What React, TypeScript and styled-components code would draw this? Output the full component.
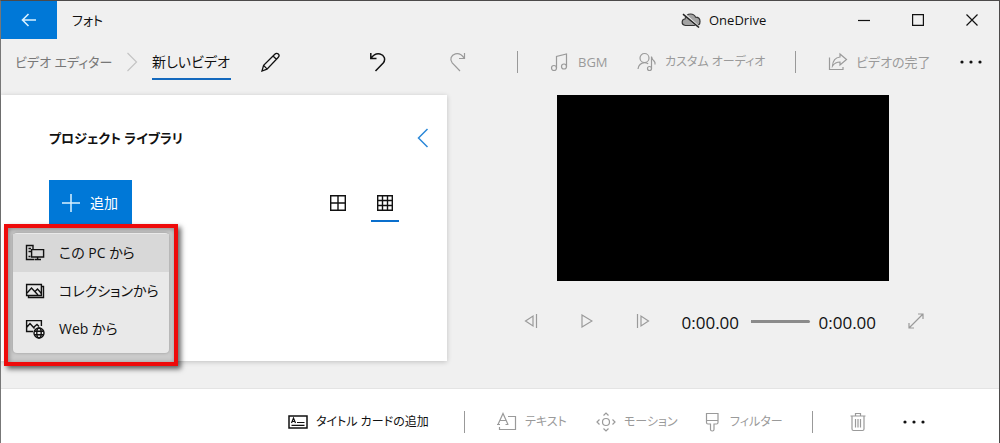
import React from "react";
import styled, { createGlobalStyle, css } from "styled-components";

const Global = createGlobalStyle`
  * { box-sizing: border-box; }
  body {
    margin: 0;
    background: #f0f0f0;
    color: #111;
    font-family: "Open Sans", "Noto Sans CJK JP", sans-serif;
    font-size: 14px;
    line-height: 20px;
    font-feature-settings: "palt";
  }
  button, a, h2, input { font: inherit; color: inherit; margin: 0; }
`;

const BLUE = "#0078d7";
const MUTED = "#9a9a9a";

const AppWindow = styled.div`
  display: flex;
  flex-direction: column;
  min-height: 100vh;
  border: 1px solid #4c4a4a;
  border-left-color: #777;
  border-bottom: 0;
`;

const bare = css`
  border: 0;
  padding: 0;
  background: none;
  display: flex;
  align-items: center;
  white-space: nowrap;
  cursor: pointer;
`;

const TitleBar = styled.header`
  display: flex;
  align-items: stretch;
  height: 38px;
`;

const BackButton = styled.button`
  ${bare}
  justify-content: center;
  width: 56px;
  background: ${BLUE};
`;

const AppName = styled.span`
  display: flex;
  align-items: center;
  padding-left: 15px;
  font-size: 13px;
`;

const Account = styled.button`
  ${bare}
  gap: 8px;
  margin-left: auto;
  width: 156px;
  font-size: 13px;
`;

const WindowButton = styled.button`
  ${bare}
  justify-content: center;
  width: 54px;
`;

const CommandBar = styled.nav`
  display: flex;
  align-items: center;
  padding: 0 17px 10px 14px;
`;

const Crumb = styled.a`
  width: 100px;
  color: #777;
  font-size: 13px;
  text-decoration: none;
  white-space: nowrap;
`;

const CrumbArrow = styled.span`
  display: flex;
  padding: 0 14px 0 11px;
`;

const ProjectName = styled.span`
  width: 79px;
  padding: 8px 0 6px;
  border-bottom: 2px solid #1469bd;
  white-space: nowrap;
`;

const IconButton = styled.button<{ $left?: number; $muted?: boolean }>`
  ${bare}
  justify-content: center;
  width: 22px;
  height: 46px;
  margin-left: ${(p) => p.$left ?? 0}px;
  color: ${(p) => (p.$muted ? MUTED : "#111")};
`;

const ToolGroup = styled.div`
  display: flex;
  align-items: center;
  margin-left: auto;
`;

const Tool = styled.button<{ $width: number; $muted?: boolean; $left?: number; $compact?: boolean }>`
  ${bare}
  gap: 8px;
  height: 46px;
  width: ${(p) => p.$width}px;
  margin-left: ${(p) => p.$left ?? 0}px;
  color: ${(p) => (p.$muted ? MUTED : "#111")};
  font-size: ${(p) => (p.$compact ? 12 : 13)}px;
  svg { flex: none; }
`;

const Separator = styled.span`
  width: 1px;
  height: 22px;
  margin: 0 32px;
  background: #999;
`;

const Main = styled.main`
  display: grid;
  grid-template-columns: 446px 1fr;
  align-items: start;
  flex: 1;
  padding-bottom: 27px;
`;

const Library = styled.section`
  min-height: 266px;
  background: #fff;
  box-shadow: 0 1px 5px rgba(0, 0, 0, 0.2);
`;

const LibraryHeader = styled.div`
  display: flex;
  align-items: center;
  justify-content: space-between;
  padding: 28px 14px 27px 48px;
`;

const LibraryTitle = styled.h2`
  font-size: 13px;
  font-weight: 600;
  line-height: 30px;
`;

const CollapseButton = styled.button`
  ${bare}
  justify-content: center;
  width: 20px;
  height: 30px;
`;

const LibraryActions = styled.div`
  display: flex;
  align-items: flex-start;
  justify-content: space-between;
  padding: 0 48px;
`;

const AddArea = styled.div`
  position: relative;
`;

const AddButton = styled.button`
  ${bare}
  gap: 9px;
  width: 83px;
  height: 46px;
  padding-left: 12px;
  background: ${BLUE};
  color: #fff;
`;

const Highlight = styled.div`
  position: absolute;
  top: 44px;
  left: -45px;
  z-index: 1;
  width: 174px;
  padding: 5px 5px 9px;
  border: 4px solid #ee0a0a;
  background: #cbcbcb;
  box-shadow: 3px 3px 5px rgba(0, 0, 0, 0.6), inset 1px 1px 5px rgba(0, 0, 0, 0.35);
`;

const Menu = styled.div`
  padding: 1px 0 5px;
  border-radius: 4px;
  background: #e9e9e9;
  box-shadow: 0 0 3px rgba(0, 0, 0, 0.25);
`;

const MenuItem = styled.button<{ $active?: boolean }>`
  ${bare}
  gap: 14px;
  width: 100%;
  height: 38px;
  padding-left: 12px;
  background: ${(p) => (p.$active ? "#d8d8d8" : "transparent")};
  svg { flex: none; }
`;

const ViewModes = styled.div`
  display: flex;
  gap: 19px;
`;

const ViewButton = styled.button<{ $active?: boolean }>`
  ${bare}
  justify-content: center;
  width: 28px;
  height: 42px;
  padding-top: 6px;
  border-bottom: 2px solid ${(p) => (p.$active ? "#0a6fcd" : "transparent")};
`;

const Preview = styled.section`
  display: flex;
  flex-direction: column;
  align-items: center;
`;

const Screen = styled.div`
  width: 60%;
  aspect-ratio: 16 / 9;
  background: #000;
`;

const Transport = styled.div`
  display: flex;
  align-items: center;
  padding-top: 17px;
`;

const Playhead = styled.div`
  display: flex;
  align-items: center;
  margin-left: 28px;
`;

const Time = styled.span`
  width: 60px;
  padding-top: 3px;
  font-size: 17px;
  line-height: 24px;
`;

const Seek = styled.input`
  appearance: none;
  width: 59px;
  height: 3px;
  margin: 0 9px;
  border-radius: 2px;
  background: #8b8b8b;
  &::-webkit-slider-thumb { appearance: none; width: 1px; height: 3px; background: #8b8b8b; }
`;

const StoryBar = styled.footer`
  display: flex;
  align-items: center;
  height: 55px;
  padding: 12px 74px 0 16px;
  border-top: 1px solid #e4e4e4;
  background: #fff;
`;

type IconProps = { w?: number; h?: number; color?: string; sw?: number; children: React.ReactNode };
const Icon = ({ w = 20, h = 20, color = "currentColor", sw = 1.2, children }: IconProps) => (
  <svg width={w} height={h} viewBox={`0 0 ${w} ${h}`} fill="none" stroke={color} strokeWidth={sw} aria-hidden="true">
    {children}
  </svg>
);

const Dots = () => (
  <Icon w={22} h={4}>
    <g fill="currentColor" stroke="none">
      <circle cx="2" cy="2" r="1.6" />
      <circle cx="11" cy="2" r="1.6" />
      <circle cx="20" cy="2" r="1.6" />
    </g>
  </Icon>
);

export default function App() {
  return (
    <>
      <Global />
      <AppWindow>
        <TitleBar>
          <BackButton aria-label="戻る">
            <Icon w={16} h={14} color="#d9f1ff" sw={1.6}>
              <path d="M15 7H1.5M7.500 1 1.500 7l6 6" />
            </Icon>
          </BackButton>
          <AppName>フォト</AppName>
          <Account>
            <Icon w={20} h={16}>
              <path d="M4.500 13.500C2 13 1 11.500 1.200 9.700 1.400 8 2.600 7 4 7 4.500 4 7 2 9.700 2c2.300 0 4 1.200 4.900 3.200 2.600.1 4.400 1.800 4.400 4.200s-1.600 4.100-4 4.100Z" fill="#a3a3a3" stroke="#333" />
              <path d="m2 1 16 14.500" stroke="#f0f0f0" strokeWidth="2.400" />
              <path d="m2 2.200 16 13.300" stroke="#222" strokeWidth="1.500" />
            </Icon>
            OneDrive
          </Account>
          <WindowButton aria-label="最小化">
            <Icon w={12} h={12}><path d="M0 6.500h12" /></Icon>
          </WindowButton>
          <WindowButton aria-label="最大化">
            <Icon w={12} h={12}><path d="M.6.6h10.800v10.800H.6z" /></Icon>
          </WindowButton>
          <WindowButton aria-label="閉じる">
            <Icon w={12} h={12}><path d="m.5.5 11 11m0-11-11 11" /></Icon>
          </WindowButton>
        </TitleBar>

        <CommandBar aria-label="コマンド">
          <Crumb href="#editor">ビデオ エディター</Crumb>
          <CrumbArrow>
            <Icon w={12} h={20} color="#c4c4c4"><path d="m1.500 1 9 9-9 9" /></Icon>
          </CrumbArrow>
          <ProjectName>新しいビデオ</ProjectName>
          <IconButton aria-label="名前の変更" $left={29}>
            <Icon sw={1.3}>
              <path d="m1 19 1.600-5.600L13.800 2.200c1.100-1.100 2.600-1.100 3.500-.2s.9 2.400-.2 3.500L6 17.200Z M2.600 13.400l3.600 3.700M12 4l3.700 3.500" />
            </Icon>
          </IconButton>
          <IconButton aria-label="元に戻す" $left={85}>
            <Icon sw={1.5}>
              <path d="M2.800 1v5.500H8.500M3.100 6.200C5.400 2.800 8.900 1.200 12 1.900c4.300 1 6 5.700 3.200 9L7.500 19" />
            </Icon>
          </IconButton>
          <IconButton aria-label="やり直し" $left={58} $muted>
            <Icon>
              <path d="M16.500 1v5.500H11M16.200 6.200C14 2.800 10.500 1.200 7.400 1.900c-4.300 1-6 5.700-3.200 9L12 19" />
            </Icon>
          </IconButton>
          <ToolGroup>
            <Separator />
            <Tool $width={59} $muted>
              <Icon>
                <path d="M6.500 16V4.500L16.500 2v12.500" />
                <circle cx="4" cy="16" r="2.500" />
                <circle cx="14" cy="14.500" r="2.500" />
              </Icon>
              BGM
            </Tool>
            <Tool $width={126} $left={28} $muted $compact>
              <Icon>
                <circle cx="7.500" cy="6" r="4.500" />
                <path d="M1 17c.3-3.500 3-6.300 6.500-6.300 1.500 0 2.700.4 3.700 1.200M14.500 16.500V4.500c.3 2.300 1.200 3.300 2.500 4.500 1 1 1.300 2 1 3.500" />
                <circle cx="12.500" cy="16.500" r="2" />
              </Icon>
              カスタム オーディオ
            </Tool>
            <Separator />
            <Tool $width={100} $muted>
              <Icon>
                <path d="M1.500 5.500V17.500h13.500V15" />
                <path d="M12 2l6.500 5.500-6.500 5.500V10C8.500 10 6.500 11 4.500 14 4.800 9 7.500 5.500 12 5Z" />
              </Icon>
              ビデオの完了
            </Tool>
            <IconButton aria-label="その他" $left={32}><Dots /></IconButton>
          </ToolGroup>
        </CommandBar>

        <Main>
          <Library>
            <LibraryHeader>
              <LibraryTitle>プロジェクト ライブラリ</LibraryTitle>
              <CollapseButton aria-label="ライブラリを閉じる">
                <Icon w={12} h={20} color="#2b88d8" sw={1.5}><path d="M10.500 1 1.500 10l9 9" /></Icon>
              </CollapseButton>
            </LibraryHeader>
            <LibraryActions>
              <AddArea>
                <AddButton aria-haspopup="menu" aria-expanded="true">
                  <Icon sw={1.5} color="#d9f1ff"><path d="M10 1v18M1 10h18" /></Icon>
                  追加
                </AddButton>
                <Highlight>
                  <Menu role="menu">
                    <MenuItem role="menuitem" $active>
                      <Icon sw={1.4}>
                        <path d="M9 16.500H1.500v-14H8V6M3.500 5.500h2.500M3.500 8.500h2.500M3.500 13.500h2" />
                        <path d="M6.600 6.600h12v7.400h-12zM12.600 14v2.500M9.500 16.500h6.500" />
                      </Icon>
                      この PC から
                    </MenuItem>
                    <MenuItem role="menuitem">
                      <Icon sw={1.4}>
                        <path d="M1.600 3.500h14.800v11H1.600zM16.500 5.500h2v11h-15v-2" />
                        <path d="m2 12 4.500-5 6.500 7M10 10.500l2.500-2.500 4 4.500" />
                      </Icon>
                      コレクションから
                    </MenuItem>
                    <MenuItem role="menuitem">
                      <Icon sw={1.4}>
                        <path d="M8 12.500H1.600V1.600h14.800V7M2 8l3-3.500 4.500 5M9 8l3-2.500 2 2" />
                        <circle cx="14" cy="14" r="5" />
                        <ellipse cx="14" cy="14" rx="2.200" ry="5" />
                        <path d="M9.500 12.300h9M9.500 15.700h9" />
                      </Icon>
                      Web から
                    </MenuItem>
                  </Menu>
                </Highlight>
              </AddArea>
              <ViewModes>
                <ViewButton aria-label="大きい表示">
                  <Icon w={16} h={16} sw={1.4}><path d="M.7.7h14.600v14.600H.7zM8 .7v14.600M.7 8h14.600" /></Icon>
                </ViewButton>
                <ViewButton aria-label="小さい表示" $active>
                  <Icon w={16} h={16} sw={1.4}><path d="M.7.7h14.600v14.600H.7zM5.500.7v14.600M10.500.7v14.600M.7 5.500h14.600M.7 10.500h14.600" /></Icon>
                </ViewButton>
              </ViewModes>
            </LibraryActions>
          </Library>

          <Preview>
            <Screen />
            <Transport>
              <IconButton aria-label="前のフレーム" $muted>
                <Icon w={14} h={14}><path d="M9 2v10L1.500 7zM12.500 0v14" /></Icon>
              </IconButton>
              <IconButton aria-label="再生" $left={34} $muted>
                <Icon w={12} h={14}><path d="M1 1v12l10-6z" /></Icon>
              </IconButton>
              <IconButton aria-label="次のフレーム" $left={34} $muted>
                <Icon w={14} h={14}><path d="M5 2v10l7.500-5zM1.500 0v14" /></Icon>
              </IconButton>
              <Playhead>
                <Time>0:00.00</Time>
                <Seek type="range" aria-label="再生位置" defaultValue={0} />
                <Time>0:00.00</Time>
              </Playhead>
              <IconButton aria-label="全画面表示" $left={26} $muted>
                <Icon w={16} h={16}><path d="M1 15 15 1M10 1h5v5M1 10v5h5" /></Icon>
              </IconButton>
            </Transport>
          </Preview>
        </Main>

        <StoryBar>
          <ToolGroup>
            <Tool $width={144} $compact>
              <Icon sw={1.5}>
                <path d="M1 4h18v12H1z" />
                <path d="m3.500 11 2-5 2 5M4.200 9.500h2.600M9 10.500h7.500M3.500 13.300h13" strokeWidth="1.200" />
              </Icon>
              タイトル カードの追加
            </Tool>
            <Separator />
            <Tool $width={70} $muted $compact>
              <Icon>
                <path d="m1 12.500 5-11 5 11M3 8.500h6M0 12.500h3M8.500 12.500h3M11 4.500h7.500v13h-16V15" />
              </Icon>
              テキスト
            </Tool>
            <Tool $width={78} $left={29} $muted $compact>
              <Icon>
                <circle cx="10" cy="10" r="3.500" />
                <path d="M7.500 3.500 10 1l2.500 2.500M7.500 16.500 10 19l2.500-2.500M3.500 7.500 1 10l2.500 2.500M16.500 7.500 19 10l-2.500 2.500" />
              </Icon>
              モーション
            </Tool>
            <Tool $width={78} $left={28} $muted $compact>
              <Icon>
                <path d="M16 1.500H4.500v9c0 .8.500 1.500 1.500 1.500h2.500v5.500c0 2 3.500 2 3.500 0V12h2.500c1 0 1.500-.7 1.500-1.500zM4.500 8.500H16" />
              </Icon>
              フィルター
            </Tool>
            <Separator />
            <IconButton aria-label="削除" $left={2} $muted>
              <Icon><path d="M2.500 4h15M7.500 4V1.500h5V4M4 4v13c0 1 .6 1.500 1.500 1.500h9c.9 0 1.500-.5 1.500-1.500V4M7.500 7v8.500M10 7v8.500M12.500 7v8.500" /></Icon>
            </IconButton>
            <IconButton aria-label="その他" $left={34}><Dots /></IconButton>
          </ToolGroup>
        </StoryBar>
      </AppWindow>
    </>
  );
}
